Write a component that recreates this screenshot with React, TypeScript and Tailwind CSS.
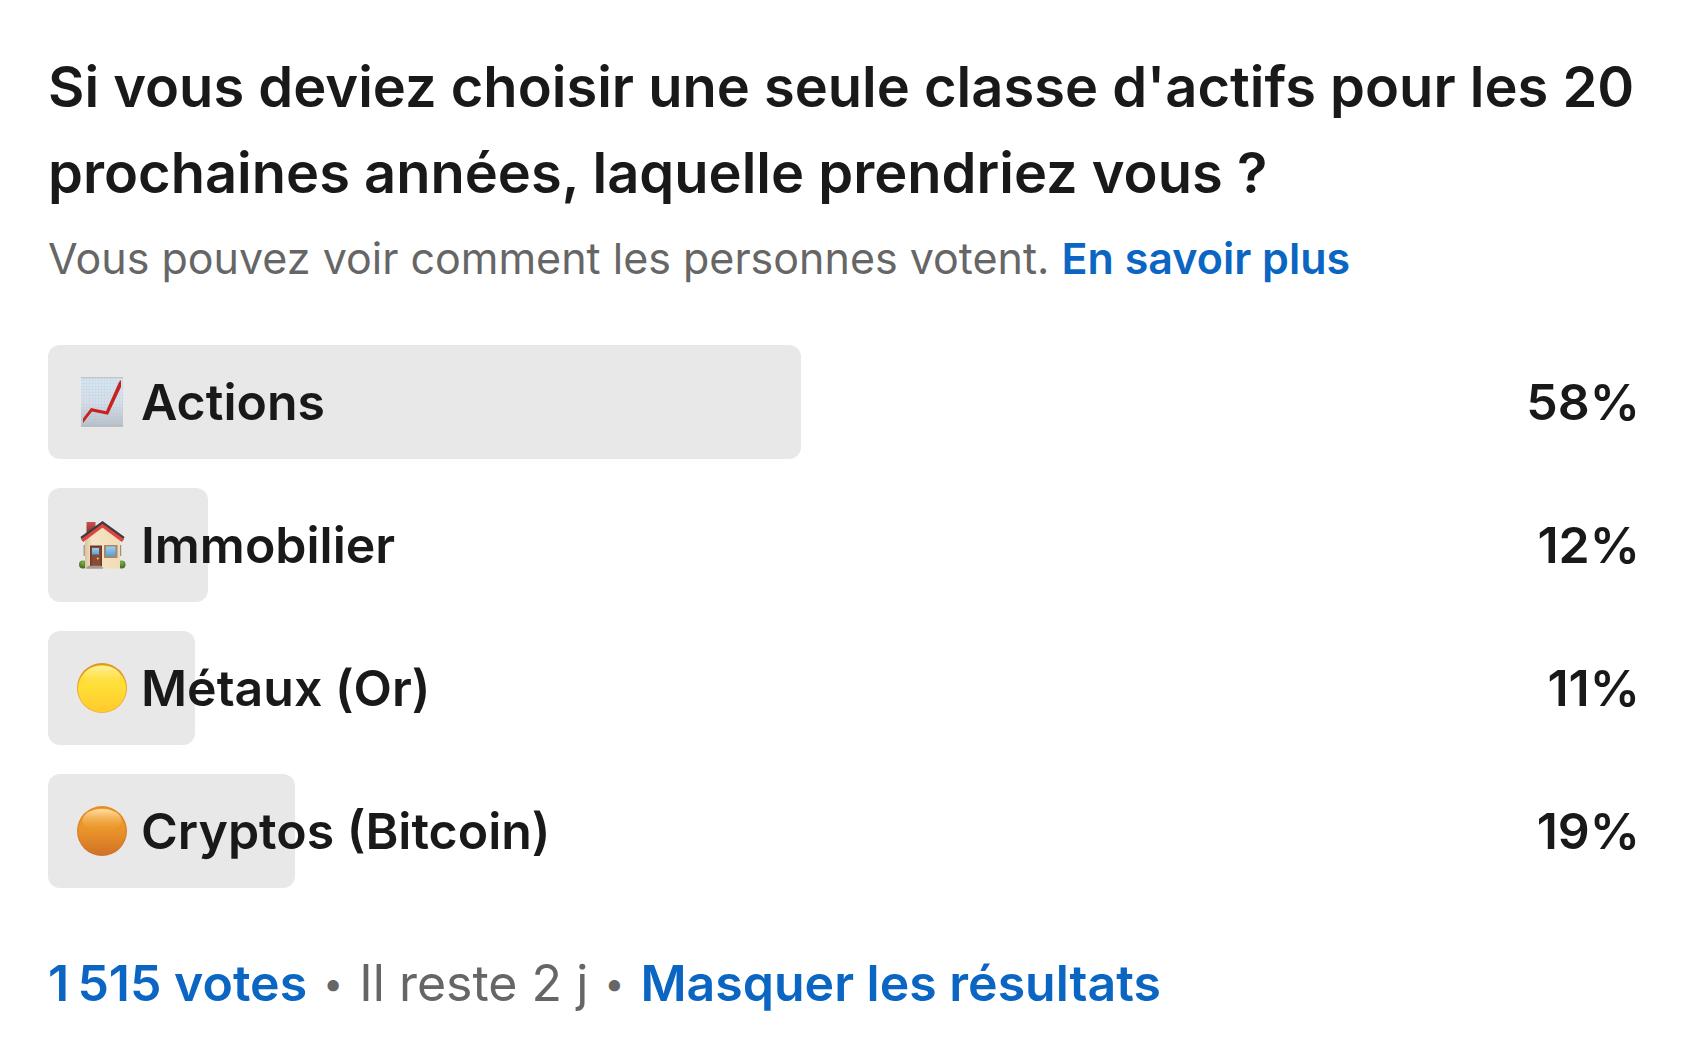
import React from 'react';

const ChartIcon = () => (
  <svg viewBox="0 0 50 50" className="size-[50px]" aria-hidden="true">
    <defs>
      <linearGradient id="paper" x1="0" y1="0" x2="0" y2="1">
        <stop offset="0" stopColor="#d6e6f4" />
        <stop offset="0.5" stopColor="#d5e0ea" />
        <stop offset="1" stopColor="#b9c1c8" />
      </linearGradient>
      <pattern id="lines" width="3" height="3" patternUnits="userSpaceOnUse">
        <path d="M0 .5H3M.5 0V3" stroke="#a9bccb" strokeWidth=".6" opacity=".3" />
      </pattern>
    </defs>
    <rect x="4" y="0.5" width="42" height="49" fill="url(#paper)" />
    <rect x="4" y="0.5" width="42" height="49" fill="url(#lines)" />
    <path d="M4 .8H46M4 49.2H46" stroke="#a9b0b6" strokeWidth=".8" />
    <path d="M6 46V41.5L14 31L29 34.3L42 5L44 3V10L31 37.800L15 34.500Z" fill="#c9211e" />
  </svg>
);

const HouseIcon = () => (
  <svg viewBox="0 0 50 50" className="size-[50px]" aria-hidden="true">
    <defs>
      <linearGradient id="wall" x1="0" y1="0" x2="1" y2="0">
        <stop offset="0" stopColor="#d9c3a0" />
        <stop offset="0.2" stopColor="#f5e3c4" />
        <stop offset="1" stopColor="#f0dcb4" />
      </linearGradient>
      <linearGradient id="chimney" x1="0" y1="0" x2="0" y2="1">
        <stop offset="0" stopColor="#c9524c" />
        <stop offset="1" stopColor="#7a2f2b" />
      </linearGradient>
      <linearGradient id="glass" x1="0" y1="0" x2="0" y2="1">
        <stop offset="0" stopColor="#9dccf0" />
        <stop offset="1" stopColor="#5b9fd4" />
      </linearGradient>
      <radialGradient id="bush" cx=".5" cy=".25" r=".8">
        <stop offset="0" stopColor="#7fae4c" />
        <stop offset="1" stopColor="#38631f" />
      </radialGradient>
    </defs>
    <ellipse cx="6" cy="44.5" rx="4" ry="4" fill="url(#bush)" />
    <ellipse cx="44.5" cy="44.5" rx="4" ry="4" fill="url(#bush)" />
    <rect x="9.5" y="2" width="9" height="13" fill="url(#chimney)" />
    <path d="M7.2 25V36M43.6 25V36" stroke="#a08c78" strokeWidth="1.2" />
    <path d="M8 20L25.5 4.5L43 20V48.5H8Z" fill="url(#wall)" />
    <path d="M5 20.5L25.5 5.2L46 20.5" fill="none" stroke="#dc4540" strokeWidth="4" />
    <path d="M4 17.8L25.5 2.4L47 17.8" fill="none" stroke="#3b3a40" strokeWidth="2.2" />
    <rect x="13" y="25.5" width="12" height="21" fill="#6b3a2a" />
    <rect x="14.5" y="27" width="9" height="19" fill="#874b36" />
    <rect x="15" y="28" width="7" height="6.5" fill="url(#glass)" />
    <circle cx="20.8" cy="38.5" r="1.1" fill="#f2c25a" />
    <rect x="27" y="25" width="13.5" height="13" fill="#a5886a" />
    <rect x="29" y="26.5" width="9.5" height="9.5" fill="url(#glass)" />
    <path d="M9.5 48.8V47.5L11.5 45.8H24L26 47.5V48.8Z" fill="#a59b93" />
  </svg>
);

const YellowIcon = () => (
  <svg viewBox="0 0 50 50" className="size-[50px]" aria-hidden="true">
    <defs>
      <linearGradient id="gold" x1="0" y1="0" x2="0" y2="1">
        <stop offset="0" stopColor="#fbd83a" />
        <stop offset="0.45" stopColor="#ffdf36" />
        <stop offset="1" stopColor="#ffca2e" />
      </linearGradient>
      <linearGradient id="goldRim" x1="0" y1="0" x2="0" y2="1">
        <stop offset="0" stopColor="#dd9422" />
        <stop offset="1" stopColor="#efb22c" />
      </linearGradient>
      <linearGradient id="goldShine" x1="0" y1="0" x2="0" y2="1">
        <stop offset="0" stopColor="#fff3a0" />
        <stop offset="1" stopColor="#ffe033" stopOpacity="0" />
      </linearGradient>
    </defs>
    <circle cx="25" cy="25" r="25" fill="url(#goldRim)" />
    <ellipse cx="25" cy="25.6" rx="24" ry="23.6" fill="url(#gold)" />
    <ellipse cx="25" cy="14" rx="18.5" ry="11" fill="url(#goldShine)" />
  </svg>
);

const OrangeIcon = () => (
  <svg viewBox="0 0 50 50" className="size-[50px]" aria-hidden="true">
    <defs>
      <linearGradient id="amber" x1="0" y1="0" x2="0" y2="1">
        <stop offset="0" stopColor="#f0a030" />
        <stop offset="0.5" stopColor="#e99228" />
        <stop offset="1" stopColor="#d07228" />
      </linearGradient>
      <linearGradient id="amberRim" x1="0" y1="0" x2="0" y2="1">
        <stop offset="0" stopColor="#e78d1e" />
        <stop offset="1" stopColor="#cf7029" />
      </linearGradient>
      <linearGradient id="amberShine" x1="0" y1="0" x2="0" y2="1">
        <stop offset="0" stopColor="#ffe0a6" />
        <stop offset="1" stopColor="#ee9c2e" stopOpacity="0" />
      </linearGradient>
    </defs>
    <circle cx="25" cy="25" r="25" fill="url(#amberRim)" />
    <ellipse cx="25" cy="25.5" rx="23.8" ry="23.5" fill="url(#amber)" />
    <ellipse cx="25" cy="14.5" rx="19.5" ry="11.5" fill="url(#amberShine)" />
  </svg>
);

const options = [
  { icon: <ChartIcon />, label: "Actions", share: 58 },
  { icon: <HouseIcon />, label: "Immobilier", share: 12 },
  { icon: <YellowIcon />, label: "Métaux (Or)", share: 11 },
  { icon: <OrangeIcon />, label: "Cryptos (Bitcoin)", share: 18.8 }
];

const App = () => {
  return (
    <main className="bg-white min-h-screen pl-12 pr-[46px] pt-11 pb-8 font-['Inter',sans-serif] text-[#191919]">
      <h1 className="font-semibold text-[56px] leading-[86px]">
        Si vous deviez choisir une seule classe d'actifs pour les 20 prochaines années, laquelle prendriez vous ?
      </h1>
      <p className="text-[43px] leading-[60px] mt-3 text-[#666666]">
        Vous pouvez voir comment les personnes votent.{" "}
        <a href="#" className="font-semibold text-[#0a66c2]">En savoir plus</a>
      </p>

      {/* Results */}
      <ul className="mt-[57px] flex flex-col gap-[29px]">
        {options.map((option) => (
          <li key={option.label} className="relative h-[114px] flex items-center">
            <div className="absolute inset-y-0 left-0 w-[81%]">
              <div className="h-full rounded-xl bg-[#e8e8e8]" style={{ width: `calc(${option.share}% + 5px)` }}></div>
            </div>
            <div className="relative flex-1 flex items-center gap-3.5 pl-[29px] font-semibold text-[50px] leading-[60px]">
              {option.icon}
              <span>{option.label}</span>
              <span className="ml-auto">{Math.round(option.share)}%</span>
            </div>
          </li>
        ))}
      </ul>

      {/* Footer */}
      <div className="mt-[65px] flex items-center gap-4 text-[50px] leading-[60px] text-[#666666]">
        <a href="#" className="font-semibold text-[#0a66c2]">1&#8239;515 votes</a>
        <span className="text-4xl">•</span>
        <span>Il reste 2 j</span>
        <span className="text-4xl">•</span>
        <button type="button" className="font-semibold text-[#0a66c2]">Masquer les résultats</button>
      </div>
    </main>
  );
};

export default App;
